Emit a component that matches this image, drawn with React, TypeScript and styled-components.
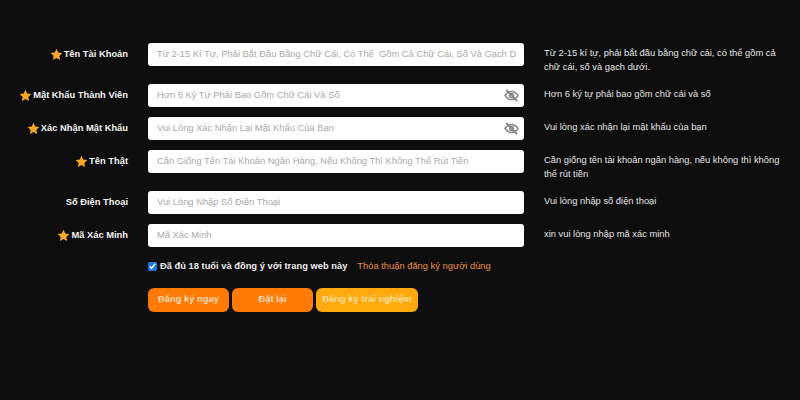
import React, { FC } from "react";
import styled, { createGlobalStyle } from "styled-components";

const GlobalStyle = createGlobalStyle`
  html, body {
    margin: 0;
    padding: 0;
    background-color: #0e0e0e;
    font-family: "Liberation Sans", Arial, sans-serif;
  }
`;

const Page = styled.div`
  width: 800px;
  height: 400px;
  overflow: hidden;
  box-sizing: border-box;
  padding: 43px 0 0 0;
  background-color: #0e0e0e;
`;

const Form = styled.form`
  display: flex;
  flex-direction: column;
  gap: 10px;
`;

const Row = styled.div<{ $tall?: boolean }>`
  display: grid;
  grid-template-columns: 128px 376px 240px;
  column-gap: 20px;
  height: ${(p) => (p.$tall ? "31px" : "23px")};
`;

const Label = styled.label`
  display: flex;
  align-items: center;
  justify-content: flex-end;
  gap: 1px;
  height: 22px;
  color: #f2f2f2;
  font-size: 9.35px;
  font-weight: bold;
  white-space: nowrap;
`;

const InputBox = styled.div`
  position: relative;
  display: flex;
  align-items: center;
  height: 23px;
  padding: 0 8px 0 9px;
  box-sizing: border-box;
  background-color: #ffffff;
  border-radius: 3px;
`;

const Input = styled.input`
  flex: 1;
  min-width: 0;
  height: 21px;
  margin-bottom: 2px;
  border: 0;
  outline: 0;
  padding: 0;
  background: transparent;
  font-family: inherit;
  font-size: 9.35px;

  &::placeholder {
    color: #a9a9a9;
    opacity: 1;
  }
`;

const EyeToggle = styled.svg`
  position: absolute;
  top: 5px;
  right: 5px;
  width: 15px;
  height: 13px;
`;

const Hint = styled.div`
  padding-top: 4px;
  color: #e4e4e4;
  font-size: 9.35px;
  line-height: 13.5px;
`;

const AgreeRow = styled.div`
  display: flex;
  align-items: center;
  margin: 12px 0 0 148px;
  height: 14px;
`;

const Check = styled.input`
  width: 9px;
  height: 9px;
  margin: 0 3px 0 0;
  accent-color: #1a73d9;
`;

const AgreeText = styled.span`
  color: #ececec;
  font-size: 9.35px;
  font-weight: bold;
`;

const AgreeLink = styled.a`
  margin-left: 10px;
  color: #ea9048;
  font-size: 9.35px;
`;

const Actions = styled.div`
  display: flex;
  gap: 3px;
  margin: 15px 0 0 148px;
`;

const ActionButton = styled.button<{ $width: number; $trial?: boolean }>`
  width: ${(p) => p.$width}px;
  height: 24px;
  padding: 0 0 2px;
  border: 0;
  border-radius: 6px;
  background-color: ${(p) => (p.$trial ? "#ffa90f" : "#ff7a06")};
  color: ${(p) => (p.$trial ? "#ffe0a0" : "#ffdcb8")};
  font-family: inherit;
  font-size: 9.35px;
  font-weight: bold;
`;

const Star: FC = () => (
  <svg width="13" height="13" viewBox="0 0 24 24" aria-hidden="true">
    <path
      fill="#fba72a"
      d="M12 1.5l3.2 7 7.6.9-5.6 5.2 1.5 7.6L12 18.4l-6.7 3.8 1.5-7.6L1.2 9.4l7.6-.9z"
    />
  </svg>
);

const EyeOff: FC = () => (
  <EyeToggle viewBox="0 0 15 13" fill="none" stroke="#858585" aria-hidden="true">
    <path strokeWidth="1.5" d="M1 6.5C3 3.6 5.2 2.4 7.5 2.4S12 3.6 14 6.5C12 9.4 9.8 10.6 7.5 10.6S3 9.4 1 6.5z" />
    <circle strokeWidth="1.4" cx="7.5" cy="6.5" r="2" />
    <path strokeWidth="1.8" d="M2.2 1l10.8 11" />
  </EyeToggle>
);

type Field = {
  label: string;
  required: boolean;
  placeholder: string;
  hint: string;
  password?: boolean;
  tall?: boolean;
};

const FIELDS: Field[] = [
  {
    label: "Tên Tài Khoản",
    required: true,
    placeholder:
      "Từ 2-15 Kí Tự, Phải Bắt Đầu Bằng Chữ Cái, Có Thể  Gồm Cả Chữ Cái, Số Và Gạch Dưới",
    hint: "Từ 2-15 kí tự, phải bắt đầu bằng chữ cái, có thể gồm cả chữ cái, số và gạch dưới.",
    tall: true,
  },
  {
    label: "Mật Khẩu Thành Viên",
    required: true,
    placeholder: "Hơn 6 Ký Tự Phải Bao Gồm Chữ Cái Và Số",
    hint: "Hơn 6 ký tự phải bao gồm chữ cái và số",
    password: true,
  },
  {
    label: "Xác Nhận Mật Khẩu",
    required: true,
    placeholder: "Vui Lòng Xác Nhận Lại Mật Khẩu Của Bạn",
    hint: "Vui lòng xác nhận lại mật khẩu của bạn",
    password: true,
  },
  {
    label: "Tên Thật",
    required: true,
    placeholder: "Cần Giống Tên Tài Khoản Ngân Hàng, Nếu Không Thì Không Thể Rút Tiền",
    hint: "Cần giống tên tài khoản ngân hàng, nếu không thì không thể rút tiền",
    tall: true,
  },
  {
    label: "Số Điện Thoại",
    required: false,
    placeholder: "Vui Lòng Nhập Số Điện Thoại",
    hint: "Vui lòng nhập số điện thoại",
  },
  {
    label: "Mã Xác Minh",
    required: true,
    placeholder: "Mã Xác Minh",
    hint: "xin vui lòng nhập mã xác minh",
  },
];

export default function App() {
  return (
    <Page>
      <GlobalStyle />
      <Form>
        {FIELDS.map((field) => (
          <Row key={field.label} $tall={field.tall}>
            <Label>
              {field.required && <Star />}
              {field.label}
            </Label>
            <InputBox>
              <Input placeholder={field.placeholder} />
              {field.password && <EyeOff />}
            </InputBox>
            <Hint>{field.hint}</Hint>
          </Row>
        ))}
      </Form>
      <AgreeRow>
        <Check type="checkbox" defaultChecked />
        <AgreeText>Đã đủ 18 tuổi và đồng ý với trang web này</AgreeText>
        <AgreeLink>Thỏa thuận đăng ký người dùng</AgreeLink>
      </AgreeRow>
      <Actions>
        <ActionButton type="button" $width={81}>Đăng ký ngay</ActionButton>
        <ActionButton type="button" $width={81}>Đặt lại</ActionButton>
        <ActionButton type="button" $width={102} $trial>Đăng ký trải nghiệm</ActionButton>
      </Actions>
    </Page>
  );
}
